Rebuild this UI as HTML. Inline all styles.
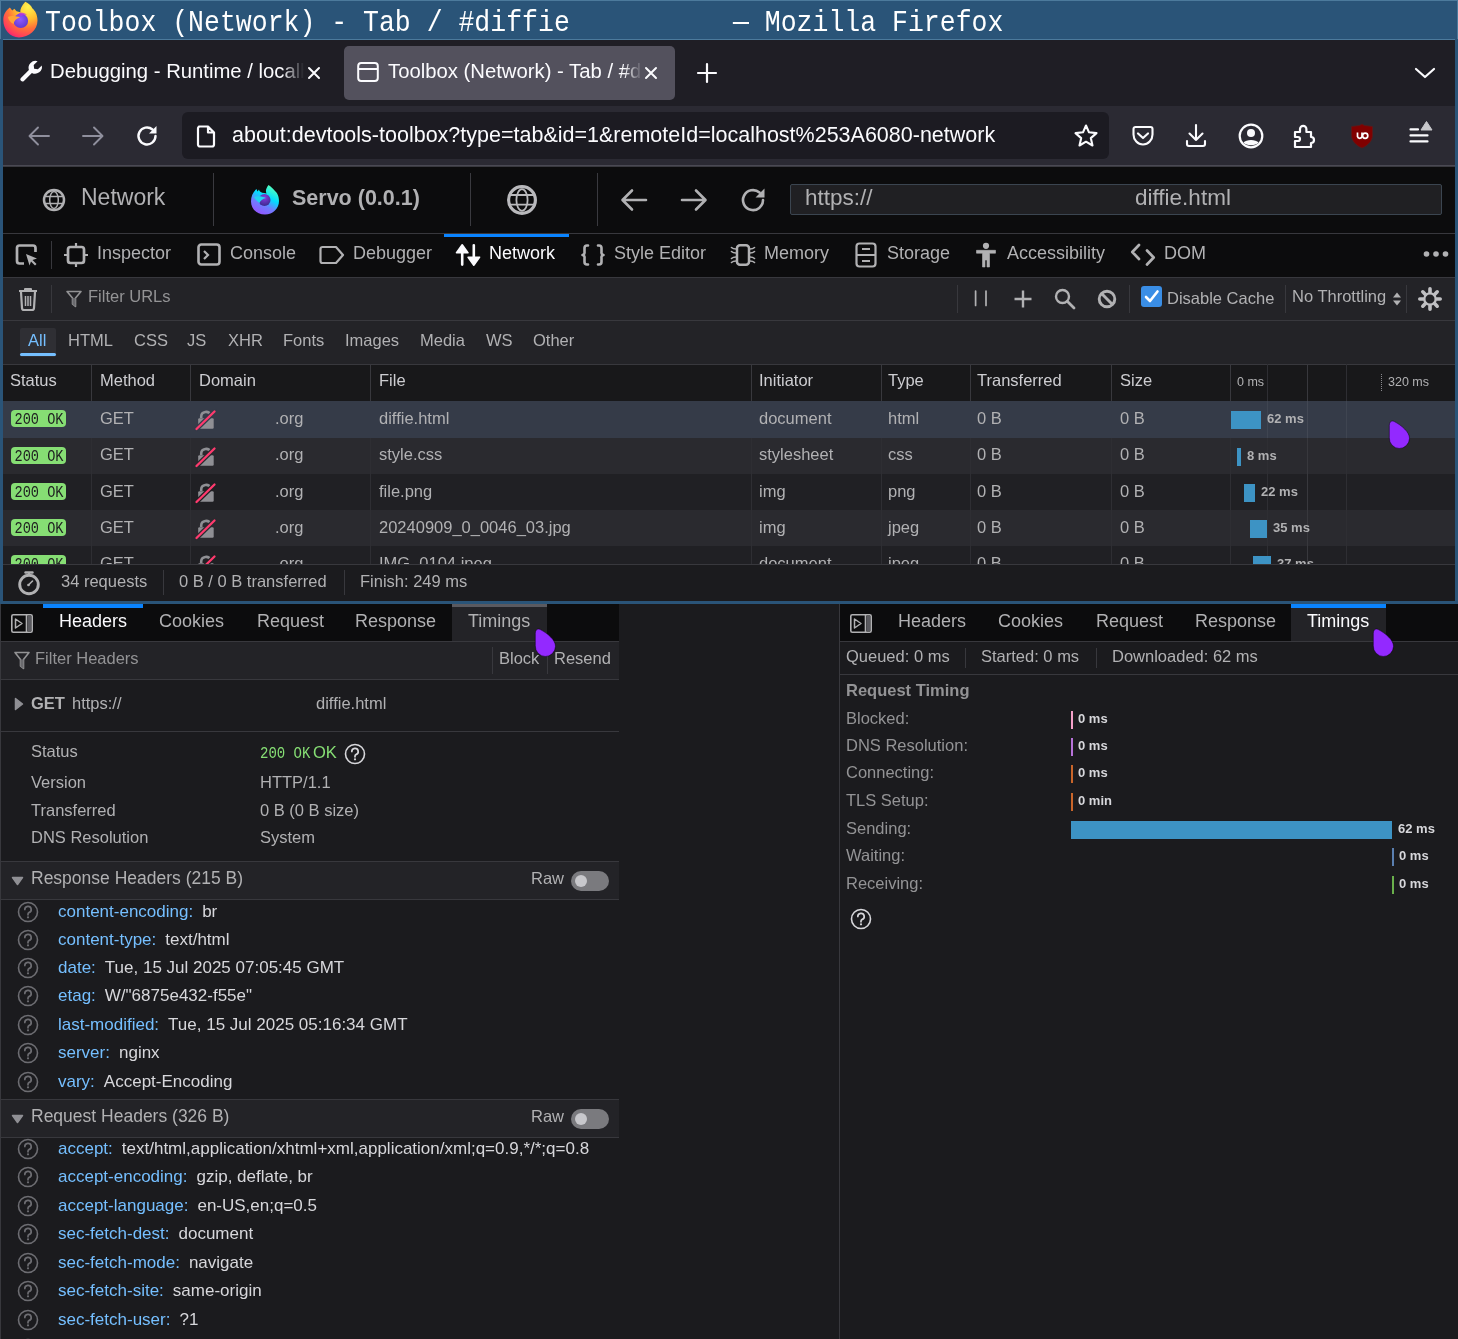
<!DOCTYPE html>
<html><head><meta charset="utf-8">
<style>
*{box-sizing:border-box;margin:0;padding:0}
html,body{width:1458px;height:1339px;overflow:hidden;background:#1b1b1e;}
body{will-change:transform;font-family:"Liberation Sans",sans-serif;color:#b1b1b3}
.a{position:absolute;white-space:nowrap}
svg{position:absolute;overflow:visible}
/* frame */
#title{left:0;top:0;width:1458px;height:40px;background:#2a5478;border:1px solid #4c7a9c}
#lb{left:0;top:39px;width:3px;height:565px;background:#2a5478}
#rb{left:1455px;top:39px;width:3px;height:565px;background:#2a5478}
#bb{left:0;top:601px;width:1458px;height:3px;background:#2a5478}
.ttl{font-family:"Liberation Mono",monospace;font-size:26.5px;color:#fff;top:4.5px;line-height:36px;transform:scaleY(1.13);transform-origin:0 50%}
#tabs{left:3px;top:40px;width:1452px;height:66px;background:#1f1e25}
#nav{left:3px;top:106px;width:1452px;height:60px;background:#2b2a33;border-bottom:1px solid #4a4953}
#servo{left:3px;top:166px;width:1452px;height:68px;background:#0c0c0d;border-top:1px solid #3a3a40;border-bottom:1px solid #38383d}
#tools{left:3px;top:234px;width:1452px;height:44px;background:#0c0c0d;border-bottom:1px solid #38383d}
#filt{left:3px;top:278px;width:1452px;height:43px;background:#232327;border-bottom:1px solid #38383d}
#types{left:3px;top:321px;width:1452px;height:44px;background:#232327;border-bottom:1px solid #38383d}
#thead{left:3px;top:365px;width:1452px;height:36px;background:#18181a}
.row{left:3px;width:1452px;height:36px}
#status{left:3px;top:564px;width:1452px;height:37px;background:#1b1b1e;border-top:1px solid #38383d}
.t16{font-size:16.5px}
.t18{font-size:18px}
.sep{position:absolute;width:1px;background:#38383d}
</style></head><body>

<!-- TITLE BAR -->
<div class="a" id="title"></div>
<div class="a" id="lb"></div>
<div class="a" id="rb"></div>
<svg style="left:0;top:0" width="40" height="40" viewBox="0 0 40 40">
 <defs>
  <radialGradient id="ffo" cx="0.72" cy="0.15" r="1.0"><stop offset="0" stop-color="#fff44f"/><stop offset="0.35" stop-color="#ffbd2e"/><stop offset="0.6" stop-color="#ff7139"/><stop offset="0.85" stop-color="#ff3b5c"/><stop offset="1" stop-color="#e31587"/></radialGradient>
  <radialGradient id="ffp" cx="0.45" cy="0.4" r="0.7"><stop offset="0" stop-color="#9059ff"/><stop offset="1" stop-color="#5b35c9"/></radialGradient>
 </defs>
 <path d="M25.3 1.8 C21.5 6 20 9.5 20.3 12.3 L16.5 11.3 L14.4 8.7 L12.2 10.6 L9.9 7.6 C5.5 10.5 3.3 15 3.3 20 C3.3 29.5 10 37.4 19 37.4 C29 37.4 37.5 30 37.5 20.5 C37.5 14.5 35 10.5 32.5 8.5 C31 5.5 28.5 3 25.3 1.8 Z" fill="url(#ffo)"/>
 <circle cx="20.8" cy="20.8" r="7.3" fill="url(#ffp)"/>
 <path d="M20.5 12.5 C23 12.5 26 13.5 27 15 C25 14.5 23 15.5 21.5 16 C19 15.5 17 13.5 20.5 12.5Z" fill="#b833e1" opacity="0.8"/>
 <path d="M8 17 C11 15.5 16.5 16 20 17.5 C16.5 18.5 14 20.5 13.5 24 C10.5 22.5 8.5 20 8 17Z" fill="#ffa436"/>
</svg>
<div class="a ttl" style="left:45px">Toolbox (Network) - Tab / #diffie</div>
<div class="a ttl" style="left:733px">— Mozilla Firefox</div>

<!-- TAB STRIP -->
<div class="a" id="tabs"></div>
<svg style="left:19px;top:60px" width="24" height="24" viewBox="0 0 16 16"><path d="M15.2 3.6 L12.6 6.2 L10.1 5.9 L9.8 3.4 L12.4 0.8 A4.6 4.6 0 0 0 6.6 6.6 L1.1 12.1 A1.45 1.45 0 0 0 3.1 14.1 L8.6 8.6 A4.6 4.6 0 0 0 15.2 3.6 Z" fill="#fbfbfe"/></svg>
<div class="a" style="left:50px;top:60px;font-size:20.3px;color:#fbfbfe;width:256px;overflow:hidden;-webkit-mask-image:linear-gradient(to right,#000 232px,transparent 254px)">Debugging - Runtime / localhost</div>
<svg style="left:307px;top:66px" width="14" height="14" viewBox="0 0 14 14"><path d="M2 2 L12 12 M12 2 L2 12" stroke="#fbfbfe" stroke-width="2" stroke-linecap="round"/></svg>
<div class="a" style="left:344px;top:46px;width:331px;height:54px;background:#53515d;border-radius:5px"></div>
<svg style="left:357px;top:61px" width="22" height="22" viewBox="0 0 22 22"><rect x="1.2" y="2" width="19.6" height="18" rx="3" fill="none" stroke="#fbfbfe" stroke-width="2"/><path d="M1.2 8 H20.8" stroke="#fbfbfe" stroke-width="2"/></svg>
<div class="a" style="left:388px;top:60px;font-size:20.3px;color:#fbfbfe;width:254px;overflow:hidden;-webkit-mask-image:linear-gradient(to right,#000 236px,transparent 254px)">Toolbox (Network) - Tab / #diffie</div>
<svg style="left:644px;top:66px" width="14" height="14" viewBox="0 0 14 14"><path d="M2 2 L12 12 M12 2 L2 12" stroke="#fbfbfe" stroke-width="2" stroke-linecap="round"/></svg>
<svg style="left:697px;top:63px" width="20" height="20" viewBox="0 0 20 20"><path d="M10 1 V19 M1 10 H19" stroke="#fbfbfe" stroke-width="2.2" stroke-linecap="round"/></svg>
<svg style="left:1414px;top:66px" width="22" height="14" viewBox="0 0 22 14"><path d="M2 3 L11 11 L20 3" fill="none" stroke="#fbfbfe" stroke-width="2.2" stroke-linecap="round" stroke-linejoin="round"/></svg>

<!-- NAV BAR -->
<div class="a" id="nav"></div>
<svg style="left:27px;top:125px" width="24" height="22" viewBox="0 0 24 22"><path d="M22 11 H3 M11 2.5 L2.5 11 L11 19.5" fill="none" stroke="#8f8f9d" stroke-width="1.9" stroke-linecap="round" stroke-linejoin="round"/></svg>
<svg style="left:81px;top:125px" width="24" height="22" viewBox="0 0 24 22"><path d="M2 11 H21 M13 2.5 L21.5 11 L13 19.5" fill="none" stroke="#8f8f9d" stroke-width="1.9" stroke-linecap="round" stroke-linejoin="round"/></svg>
<svg style="left:135px;top:124px" width="24" height="24" viewBox="0 0 24 24"><path d="M20.5 12 A8.5 8.5 0 1 1 17.5 5.5" fill="none" stroke="#fbfbfe" stroke-width="2.4" stroke-linecap="round"/><path d="M21.5 2 V9.5 H14 Z" fill="#fbfbfe"/></svg>
<div class="a" style="left:182px;top:112px;width:927px;height:47px;background:#1c1b22;border-radius:6px"></div>
<svg style="left:196px;top:125px" width="20" height="23" viewBox="0 0 20 23"><path d="M3 1.5 H12 L18 7.5 V19.5 A2 2 0 0 1 16 21.5 H4 A2 2 0 0 1 2 19.5 V3.5 A2 2 0 0 1 4 1.5 Z M12 1.5 V7.5 H18" fill="none" stroke="#fbfbfe" stroke-width="2.2" stroke-linejoin="round"/></svg>
<div class="a" style="left:232px;top:122.5px;font-size:21.5px;color:#fbfbfe">about:devtools-toolbox?type=tab&amp;id=1&amp;remoteId=localhost%253A6080-network</div>
<svg style="left:1073px;top:123px" width="26" height="26" viewBox="0 0 26 26"><path d="M13 2.5 L16 9.3 L23.5 10.1 L17.8 15.1 L19.5 22.5 L13 18.7 L6.5 22.5 L8.2 15.1 L2.5 10.1 L10 9.3 Z" fill="none" stroke="#fbfbfe" stroke-width="2.1" stroke-linejoin="round"/></svg>
<svg style="left:1131px;top:125px" width="24" height="22" viewBox="0 0 24 22"><path d="M4.5 2 H19.5 A2 2 0 0 1 21.5 4 V9.5 A9.5 10 0 0 1 2.5 9.5 V4 A2 2 0 0 1 4.5 2 Z" fill="none" stroke="#fbfbfe" stroke-width="2.1"/><path d="M7 8.5 L12 13 L17 8.5" fill="none" stroke="#fbfbfe" stroke-width="2.2" stroke-linecap="round" stroke-linejoin="round"/></svg>
<svg style="left:1184px;top:123px" width="24" height="26" viewBox="0 0 24 26"><path d="M12 2 V17 M5.5 10.5 L12 17 L18.5 10.5" fill="none" stroke="#fbfbfe" stroke-width="2.1" stroke-linecap="round" stroke-linejoin="round"/><path d="M3 18 V21 A2 2 0 0 0 5 23 H19 A2 2 0 0 0 21 21 V18" fill="none" stroke="#fbfbfe" stroke-width="2.1" stroke-linecap="round"/></svg>
<svg style="left:1238px;top:123px" width="26" height="26" viewBox="0 0 26 26"><circle cx="13" cy="13" r="11.3" fill="none" stroke="#fbfbfe" stroke-width="2.2"/><circle cx="13" cy="10" r="4" fill="#fbfbfe"/><path d="M5.5 19.5 C8 16 18 16 20.5 19.5 C18 23 8 23 5.5 19.5Z" fill="#fbfbfe"/></svg>
<svg style="left:1293px;top:123px" width="24" height="26" viewBox="0 0 24 26"><path d="M2 9 H7 V6 A3.2 3.2 0 0 1 13.4 6 V9 H18 V14 A3 3 0 0 1 18 20 V24 H2 V18 H5 A2 2 0 0 0 5 14 H2 Z" fill="none" stroke="#fbfbfe" stroke-width="2.2" stroke-linejoin="round"/></svg>
<svg style="left:1348px;top:123px" width="28" height="26" viewBox="0 0 28 26"><path d="M14 1 L16.5 2.5 L24.5 3.5 V12 C24.5 18 20 22.5 14 25 C8 22.5 3.5 18 3.5 12 V3.5 L11.5 2.5 Z" fill="#800000" stroke="#5a1a1a" stroke-width="0.8"/><path d="M9.5 9.5 V13.5 A2.3 2.3 0 0 0 14 13.5 V9.5" fill="none" stroke="#fff" stroke-width="1.7"/><circle cx="17.2" cy="12.8" r="2.6" fill="none" stroke="#fff" stroke-width="1.7"/></svg>
<svg style="left:1405px;top:118px" width="30" height="28" viewBox="0 0 30 28"><path d="M5.5 11.4 H13 M5.5 17.4 H22.5 M5.5 23.4 H22.5" stroke="#fbfbfe" stroke-width="2.2" stroke-linecap="round"/><path d="M16 12 L21.5 3.5 L27 12 Z" fill="#c8c8cc" stroke="#c8c8cc" stroke-width="1" stroke-linejoin="round"/></svg>

<!-- SERVO TOOLBAR -->
<div class="a" id="servo"></div>
<div class="sep" style="left:213px;top:173px;height:53px;background:#3a3a3f"></div>
<div class="sep" style="left:470px;top:173px;height:53px;background:#3a3a3f"></div>
<div class="sep" style="left:597px;top:173px;height:53px;background:#3a3a3f"></div>
<svg style="left:41.7px;top:187.5px" width="24" height="24" viewBox="0 0 24 24"><g fill="none" stroke="#b1b1b3"><circle cx="12" cy="12" r="10" stroke-width="2.5"/><ellipse cx="12" cy="12" rx="4.3" ry="8.5" stroke-width="1.5"/><path d="M3 8.5 H21 M3 15.5 H21" stroke-width="1.5"/></g></svg>
<div class="a" style="left:81px;top:184px;font-size:23px;color:#b1b1b3">Network</div>
<svg style="left:250px;top:184px" width="30" height="31" viewBox="0 0 30 31"><defs><linearGradient id="nl" x1="0.75" y1="0.05" x2="0.3" y2="0.95"><stop offset="0" stop-color="#54ffbd"/><stop offset="0.4" stop-color="#00ddff"/><stop offset="0.7" stop-color="#6f7dff"/><stop offset="1" stop-color="#9059ff"/></linearGradient><radialGradient id="nc" cx="0.5" cy="0.3" r="0.7"><stop offset="0" stop-color="#8a3be0"/><stop offset="1" stop-color="#3a2a8f"/></radialGradient></defs><path d="M18.5 1 C15.5 5 15.5 7.5 16.5 9.5 C13 8.5 11 9 9.5 7 L9 5.5 L7.5 7.5 L6.5 5 C3 8 1 12 1 17.5 C1 25 7 30.5 15 30.5 C23 30.5 29 24.5 29 17 C29 12 27 8.5 25 7 C23 4.5 21 2.5 18.5 1Z" fill="url(#nl)"/><circle cx="14.5" cy="16" r="6" fill="url(#nc)"/><path d="M4 13 C7 12 12 12 16 14 C12.5 15 10.5 16.5 9.5 19 C7 17 5 15 4 13Z" fill="#1fd5f0"/></svg>
<div class="a" style="left:292px;top:186px;font-size:21.5px;font-weight:bold;color:#b1b1b3">Servo (0.0.1)</div>
<svg style="left:506px;top:184px" width="32" height="32" viewBox="0 0 32 32"><g fill="none" stroke="#b9b9bc"><circle cx="16" cy="16" r="13.4" stroke-width="3.2"/><ellipse cx="16" cy="16" rx="5.6" ry="10.8" stroke-width="1.8"/><path d="M4 11 H28 M4 20.7 H28" stroke-width="1.8"/></g></svg>
<svg style="left:620px;top:188px" width="28" height="24" viewBox="0 0 28 24"><path d="M26 12 H3 M12 2.5 L2.5 12 L12 21.5" fill="none" stroke="#b1b1b3" stroke-width="2.6" stroke-linecap="round" stroke-linejoin="round"/></svg>
<svg style="left:680px;top:188px" width="28" height="24" viewBox="0 0 28 24"><path d="M2 12 H25 M16 2.5 L25.5 12 L16 21.5" fill="none" stroke="#b1b1b3" stroke-width="2.6" stroke-linecap="round" stroke-linejoin="round"/></svg>
<svg style="left:739px;top:186px" width="28" height="28" viewBox="0 0 28 28"><path d="M24 14 A10 10 0 1 1 20.5 6.5" fill="none" stroke="#b1b1b3" stroke-width="2.6" stroke-linecap="round"/><path d="M25.5 2.5 V11.5 H16.5 Z" fill="#b1b1b3"/></svg>
<div class="a" style="left:790px;top:184px;width:652px;height:31px;background:#202023;border:1px solid #3b4550;border-radius:2px"></div>
<div class="a" style="left:805px;top:185px;font-size:22.5px;color:#b1b1b3">https://</div>
<div class="a" style="left:1135px;top:185px;font-size:22.5px;color:#b1b1b3">diffie.html</div>

<!-- TOOL TABS -->
<div class="a" id="tools"></div>
<div class="a" style="left:444px;top:234px;width:125px;height:3px;background:#0a84ff"></div>
<div class="sep" style="left:51px;top:241px;height:28px"></div>
<svg style="left:15px;top:243px" width="24" height="24" viewBox="0 0 24 24"><path d="M9 20.5 H4.5 A2.5 2.5 0 0 1 2 18 V5 A2.5 2.5 0 0 1 4.5 2.5 H18 A2.5 2.5 0 0 1 20.5 5 V9" fill="none" stroke="#b1b1b3" stroke-width="2.7"/><path d="M11 11 L22 15.5 L17.5 17 L21.5 21 L20 22.5 L16 18.5 L14.5 22.5 Z" fill="#b1b1b3"/></svg>
<svg style="left:63px;top:242px" width="26" height="26" viewBox="0 0 26 26"><rect x="5" y="5" width="16" height="16" rx="2.5" fill="none" stroke="#b1b1b3" stroke-width="2.7"/><path d="M13 1 V5 M13 21 V25 M1 13 H5 M21 13 H25" stroke="#b1b1b3" stroke-width="2.2"/></svg>
<div class="a t18" style="left:97px;top:243px;color:#b1b1b3">Inspector</div>
<svg style="left:197px;top:243px" width="24" height="23" viewBox="0 0 24 23"><rect x="1.5" y="1.5" width="21" height="20" rx="2.8" fill="none" stroke="#b1b1b3" stroke-width="2.6"/><path d="M7 8 L11 12 L7 16" fill="none" stroke="#b1b1b3" stroke-width="2.2"/></svg>
<div class="a t18" style="left:230px;top:243px;color:#b1b1b3">Console</div>
<svg style="left:319px;top:245px" width="26" height="20" viewBox="0 0 26 20"><path d="M3.5 2 H17 L24 10 L17 18 H3.5 A2 2 0 0 1 1.5 16 V4 A2 2 0 0 1 3.5 2 Z" fill="none" stroke="#b1b1b3" stroke-width="2.2" stroke-linejoin="round"/></svg>
<div class="a t18" style="left:353px;top:243px;color:#b1b1b3">Debugger</div>
<svg style="left:452px;top:240px" width="30" height="28" viewBox="0 0 30 28"><path d="M10.2 11 V24.6 M21.8 5.2 V19" stroke="#fbfbfe" stroke-width="2.6" stroke-linecap="round"/><path d="M4.5 12.8 L10.2 4.8 L15.9 12.8 Z M16.1 17.2 L21.8 25.2 L27.5 17.2 Z" fill="#fbfbfe" stroke="#fbfbfe" stroke-width="1.6" stroke-linejoin="round"/></svg>
<div class="a t18" style="left:489px;top:243px;color:#fbfbfe">Network</div>
<svg style="left:581px;top:244px" width="24" height="22" viewBox="0 0 24 22"><path d="M7 1.5 H6 A2.5 2.5 0 0 0 3.5 4 V8 A2.5 2.5 0 0 1 1.5 11 A2.5 2.5 0 0 1 3.5 14 V18 A2.5 2.5 0 0 0 6 20.5 H7 M17 1.5 H18 A2.5 2.5 0 0 1 20.5 4 V8 A2.5 2.5 0 0 0 22.5 11 A2.5 2.5 0 0 0 20.5 14 V18 A2.5 2.5 0 0 1 18 20.5 H17" fill="none" stroke="#b1b1b3" stroke-width="2.6" stroke-linecap="round" stroke-linejoin="round"/></svg>
<div class="a t18" style="left:614px;top:243px;color:#b1b1b3">Style Editor</div>
<svg style="left:730px;top:244px" width="26" height="22" viewBox="0 0 26 22"><rect x="7" y="1.3" width="12" height="19.4" rx="3" fill="none" stroke="#b1b1b3" stroke-width="2.5"/><path d="M6 5 Q3 5 1.5 3.5 M6 9 Q3 9 1.5 7.5 M6 13 Q3 13 1.5 14.5 M6 17 Q3 17 1.5 18.5 M20 5 Q23 5 24.5 3.5 M20 9 Q23 9 24.5 7.5 M20 13 Q23 13 24.5 14.5 M20 17 Q23 17 24.5 18.5" fill="none" stroke="#b1b1b3" stroke-width="1.6" stroke-linecap="round"/></svg>
<div class="a t18" style="left:764px;top:243px;color:#b1b1b3">Memory</div>
<svg style="left:855px;top:242px" width="22" height="26" viewBox="0 0 22 26"><rect x="1.5" y="1.5" width="19" height="23" rx="3" fill="none" stroke="#b1b1b3" stroke-width="2.2"/><path d="M1.5 13 H20.5 M7 7 H15 M7 19 H15" stroke="#b1b1b3" stroke-width="2.2"/></svg>
<div class="a t18" style="left:887px;top:243px;color:#b1b1b3">Storage</div>
<svg style="left:974px;top:241px" width="24" height="28" viewBox="0 0 24 28"><circle cx="12" cy="4.8" r="3.1" fill="#b1b1b3"/><path d="M2.5 9.3 H21.5 V12.2 H15.5 V26 H13 V19 H11 V26 H8.5 V12.2 H2.5 Z" fill="#b1b1b3" stroke="#b1b1b3" stroke-width="0.6" stroke-linejoin="round"/></svg>
<div class="a t18" style="left:1007px;top:243px;color:#b1b1b3">Accessibility</div>
<svg style="left:1130px;top:243px" width="26" height="26" viewBox="0 0 26 26"><path d="M9 2 L2.3 9 L9 16 M17 7.5 L23.7 14.5 L17 21.5" fill="none" stroke="#b1b1b3" stroke-width="2.7" stroke-linecap="round" stroke-linejoin="round"/></svg>
<div class="a t18" style="left:1164px;top:243px;color:#b1b1b3">DOM</div>
<svg style="left:1423px;top:250px" width="26" height="8" viewBox="0 0 26 8"><circle cx="3.5" cy="4" r="2.8" fill="#b1b1b3"/><circle cx="13" cy="4" r="2.8" fill="#b1b1b3"/><circle cx="22.5" cy="4" r="2.8" fill="#b1b1b3"/></svg>

<!-- FILTER BAR -->
<div class="a" id="filt"></div>
<div class="sep" style="left:51px;top:285px;height:28px"></div>
<svg style="left:18px;top:287px" width="20" height="24" viewBox="0 0 20 24"><path d="M1 4 H19 M7 4 V2 H13 V4" fill="none" stroke="#b1b1b3" stroke-width="2" stroke-linejoin="round"/><path d="M3 5 L4 21 A2 2 0 0 0 6 23 H14 A2 2 0 0 0 16 21 L17 5" fill="none" stroke="#b1b1b3" stroke-width="2.2"/><path d="M7.5 9 V19 M10 9 V19 M12.5 9 V19" stroke="#b1b1b3" stroke-width="1.5"/></svg>
<svg style="left:66px;top:290px" width="16" height="18" viewBox="0 0 16 18"><path d="M1 1.5 H15 L9.5 8 V16.5 L6.5 14 V8 Z" fill="none" stroke="#939395" stroke-width="1.6" stroke-linejoin="round"/><path d="M6.5 8 V14 L9.5 16.5 V8Z" fill="#6a6a6e"/></svg>
<div class="a t16" style="left:88px;top:287px;color:#939395">Filter URLs</div>
<div class="sep" style="left:957px;top:285px;height:28px"></div>
<svg style="left:974px;top:290px" width="14" height="16" viewBox="0 0 14 16"><path d="M1.6 1 V15.5 M12 1 V15.5" stroke="#b1b1b3" stroke-width="1.7" stroke-linecap="round"/></svg>
<svg style="left:1013px;top:289px" width="20" height="20" viewBox="0 0 20 20"><path d="M10 1.5 V18.5 M1.5 10 H18.5" stroke="#b1b1b3" stroke-width="2.4"/></svg>
<svg style="left:1054px;top:288px" width="22" height="22" viewBox="0 0 22 22"><circle cx="8.5" cy="8.5" r="6.5" fill="none" stroke="#b1b1b3" stroke-width="2.4"/><path d="M13.5 13.5 L20 20" stroke="#b1b1b3" stroke-width="2.8" stroke-linecap="round"/></svg>
<svg style="left:1097px;top:289px" width="20" height="20" viewBox="0 0 20 20"><circle cx="10" cy="10" r="7.8" fill="none" stroke="#b1b1b3" stroke-width="2.9"/><path d="M4.8 4.8 L15.2 15.2" stroke="#b1b1b3" stroke-width="2.9"/></svg>
<div class="sep" style="left:1129px;top:285px;height:28px"></div>
<div class="a" style="left:1141px;top:286px;width:21px;height:21px;background:#3a8ee6;border-radius:3px"></div>
<svg style="left:1143px;top:288px" width="17" height="17" viewBox="0 0 17 17"><path d="M3 9 L7 13 L14.5 3.5" fill="none" stroke="#fff" stroke-width="2.6" stroke-linecap="round" stroke-linejoin="round"/></svg>
<div class="a t16" style="left:1167px;top:289px;color:#b1b1b3">Disable Cache</div>
<div class="sep" style="left:1285px;top:285px;height:28px"></div>
<div class="a t16" style="left:1292px;top:287px;color:#b1b1b3">No Throttling</div>
<svg style="left:1392px;top:291px" width="10" height="16" viewBox="0 0 10 16"><path d="M1 6.5 L5 1.5 L9 6.5Z M1 9.5 L5 14.5 L9 9.5Z" fill="#b1b1b3"/></svg>
<div class="sep" style="left:1406px;top:285px;height:28px"></div>
<svg style="left:1417px;top:286px" width="26" height="26" viewBox="0 0 26 26"><circle cx="13" cy="13" r="5.7" fill="none" stroke="#c0c0c3" stroke-width="2.3"/><path d="M19.50 13.00 L23.20 13.00 M17.60 17.60 L20.21 20.21 M13.00 19.50 L13.00 23.20 M8.40 17.60 L5.79 20.21 M6.50 13.00 L2.80 13.00 M8.40 8.40 L5.79 5.79 M13.00 6.50 L13.00 2.80 M17.60 8.40 L20.21 5.79 " stroke="#c0c0c3" stroke-width="3.6" stroke-linecap="round"/></svg>

<!-- TYPE FILTERS -->
<div class="a" id="types"></div>
<div class="a" style="left:20px;top:328px;width:36px;height:29px;background:#2f2f34;border-radius:2px"></div>
<div class="a" style="left:20px;top:353px;width:36px;height:3px;background:#75bfff;border-radius:2px"></div>
<div class="a t16" style="left:28px;top:331px;color:#75bfff">All</div>
<div class="a t16" style="left:68px;top:331px">HTML</div>
<div class="a t16" style="left:134px;top:331px">CSS</div>
<div class="a t16" style="left:187px;top:331px">JS</div>
<div class="a t16" style="left:228px;top:331px">XHR</div>
<div class="a t16" style="left:283px;top:331px">Fonts</div>
<div class="a t16" style="left:345px;top:331px">Images</div>
<div class="a t16" style="left:420px;top:331px">Media</div>
<div class="a t16" style="left:486px;top:331px">WS</div>
<div class="a t16" style="left:533px;top:331px">Other</div>

<!-- TABLE -->
<div class="a" id="thead"></div>
<div class="a row" style="top:401px;height:37px;background:#353b48"></div>
<div class="a row" style="top:438px;background:#2a2a2f"></div>
<div class="a row" style="top:474px;background:#202024"></div>
<div class="a row" style="top:510px;background:#2a2a2f"></div>
<div class="a row" style="top:546px;height:18px;background:#202024"></div>
<div class="sep" style="left:91px;top:364px;height:200px;background:#2e2e33"></div>
<div class="sep" style="left:190px;top:364px;height:200px;background:#2e2e33"></div>
<div class="sep" style="left:370px;top:364px;height:200px;background:#2e2e33"></div>
<div class="sep" style="left:751px;top:364px;height:200px;background:#2e2e33"></div>
<div class="sep" style="left:881px;top:364px;height:200px;background:#2e2e33"></div>
<div class="sep" style="left:970px;top:364px;height:200px;background:#2e2e33"></div>
<div class="sep" style="left:1111px;top:364px;height:200px;background:#2e2e33"></div>
<div class="sep" style="left:1230px;top:364px;height:200px;background:#2e2e33"></div>
<div class="sep" style="left:1267px;top:364px;height:200px;background:#2e2e33"></div>
<div class="sep" style="left:1307px;top:364px;height:200px;background:#38383d"></div>
<div class="sep" style="left:1346px;top:364px;height:200px;background:#2e2e33"></div>
<div class="sep" style="left:91px;top:364px;height:37px;background:#38383d"></div>
<div class="sep" style="left:190px;top:364px;height:37px;background:#38383d"></div>
<div class="sep" style="left:370px;top:364px;height:37px;background:#38383d"></div>
<div class="sep" style="left:751px;top:364px;height:37px;background:#38383d"></div>
<div class="sep" style="left:881px;top:364px;height:37px;background:#38383d"></div>
<div class="sep" style="left:970px;top:364px;height:37px;background:#38383d"></div>
<div class="sep" style="left:1111px;top:364px;height:37px;background:#38383d"></div>
<div class="sep" style="left:1230px;top:364px;height:37px;background:#38383d"></div>
<div class="a row" style="top:401px;height:37px;background:#353b48"></div>
<div class="sep" style="left:1267px;top:401px;height:37px;background:rgba(255,255,255,0.05)"></div>
<div class="sep" style="left:1307px;top:401px;height:37px;background:rgba(255,255,255,0.07)"></div>
<div class="sep" style="left:1346px;top:401px;height:37px;background:rgba(255,255,255,0.05)"></div>
<div class="a" style="left:1381px;top:374px;height:17px;width:1px;border-left:1px dotted #8a8a8f"></div>
<div class="a t16" style="left:10px;top:371px;color:#cdcdd1">Status</div>
<div class="a t16" style="left:100px;top:371px;color:#cdcdd1">Method</div>
<div class="a t16" style="left:199px;top:371px;color:#cdcdd1">Domain</div>
<div class="a t16" style="left:379px;top:371px;color:#cdcdd1">File</div>
<div class="a t16" style="left:759px;top:371px;color:#cdcdd1">Initiator</div>
<div class="a t16" style="left:888px;top:371px;color:#cdcdd1">Type</div>
<div class="a t16" style="left:977px;top:371px;color:#cdcdd1">Transferred</div>
<div class="a t16" style="left:1120px;top:371px;color:#cdcdd1">Size</div>
<div class="a" style="left:1237px;top:375px;font-size:12.5px;color:#b1b1b3">0 ms</div>
<div class="a" style="left:1388px;top:375px;font-size:12.5px;color:#b1b1b3">320 ms</div>
<div class="a" style="left:11px;top:410px;width:55px;height:17px;background:#86de74;border-radius:4px"></div>
<div class="a" style="left:14.5px;top:411px;font-family:'Liberation Mono',monospace;font-size:13.6px;line-height:17px;color:#1e1e20;transform:scaleY(1.17);transform-origin:0 50%">200 OK</div>
<div class="a t16" style="left:100px;top:409px">GET</div>
<svg style="left:195px;top:410px" width="22" height="22" viewBox="0 0 22 22"><path d="M6.2 8 V6.5 A4.8 4.8 0 0 1 15.5 5" fill="none" stroke="#8f8f94" stroke-width="2.6"/><rect x="3.2" y="8.2" width="15.5" height="10.5" rx="1.2" fill="#8f8f94"/><path d="M1.5 19 L19.5 1.5" stroke="#353b48" stroke-width="4.6" stroke-linecap="round"/><path d="M1.5 19 L19.5 1.5" stroke="#ff3a6e" stroke-width="2.3" stroke-linecap="round"/></svg>
<div class="a t16" style="left:275px;top:409px">.org</div>
<div class="a t16" style="left:379px;top:409px">diffie.html</div>
<div class="a t16" style="left:759px;top:409px">document</div>
<div class="a t16" style="left:888px;top:409px">html</div>
<div class="a t16" style="left:977px;top:409px">0 B</div>
<div class="a t16" style="left:1120px;top:409px">0 B</div>
<div class="a" style="left:1231px;top:411px;width:30px;height:18px;background:#3d93c4"></div>
<div class="a" style="left:1267px;top:411px;font-size:13px;font-weight:bold;color:#b1b1b3">62 ms</div>
<div class="a" style="left:11px;top:447px;width:55px;height:17px;background:#86de74;border-radius:4px"></div>
<div class="a" style="left:14.5px;top:448px;font-family:'Liberation Mono',monospace;font-size:13.6px;line-height:17px;color:#1e1e20;transform:scaleY(1.17);transform-origin:0 50%">200 OK</div>
<div class="a t16" style="left:100px;top:445px">GET</div>
<svg style="left:195px;top:447px" width="22" height="22" viewBox="0 0 22 22"><path d="M6.2 8 V6.5 A4.8 4.8 0 0 1 15.5 5" fill="none" stroke="#8f8f94" stroke-width="2.6"/><rect x="3.2" y="8.2" width="15.5" height="10.5" rx="1.2" fill="#8f8f94"/><path d="M1.5 19 L19.5 1.5" stroke="#2a2a2f" stroke-width="4.6" stroke-linecap="round"/><path d="M1.5 19 L19.5 1.5" stroke="#ff3a6e" stroke-width="2.3" stroke-linecap="round"/></svg>
<div class="a t16" style="left:275px;top:445px">.org</div>
<div class="a t16" style="left:379px;top:445px">style.css</div>
<div class="a t16" style="left:759px;top:445px">stylesheet</div>
<div class="a t16" style="left:888px;top:445px">css</div>
<div class="a t16" style="left:977px;top:445px">0 B</div>
<div class="a t16" style="left:1120px;top:445px">0 B</div>
<div class="a" style="left:1237px;top:448px;width:4px;height:18px;background:#3d93c4"></div>
<div class="a" style="left:1247px;top:448px;font-size:13px;font-weight:bold;color:#b1b1b3">8 ms</div>
<div class="a" style="left:11px;top:483px;width:55px;height:17px;background:#86de74;border-radius:4px"></div>
<div class="a" style="left:14.5px;top:484px;font-family:'Liberation Mono',monospace;font-size:13.6px;line-height:17px;color:#1e1e20;transform:scaleY(1.17);transform-origin:0 50%">200 OK</div>
<div class="a t16" style="left:100px;top:482px">GET</div>
<svg style="left:195px;top:483px" width="22" height="22" viewBox="0 0 22 22"><path d="M6.2 8 V6.5 A4.8 4.8 0 0 1 15.5 5" fill="none" stroke="#8f8f94" stroke-width="2.6"/><rect x="3.2" y="8.2" width="15.5" height="10.5" rx="1.2" fill="#8f8f94"/><path d="M1.5 19 L19.5 1.5" stroke="#202024" stroke-width="4.6" stroke-linecap="round"/><path d="M1.5 19 L19.5 1.5" stroke="#ff3a6e" stroke-width="2.3" stroke-linecap="round"/></svg>
<div class="a t16" style="left:275px;top:482px">.org</div>
<div class="a t16" style="left:379px;top:482px">file.png</div>
<div class="a t16" style="left:759px;top:482px">img</div>
<div class="a t16" style="left:888px;top:482px">png</div>
<div class="a t16" style="left:977px;top:482px">0 B</div>
<div class="a t16" style="left:1120px;top:482px">0 B</div>
<div class="a" style="left:1244px;top:484px;width:11px;height:18px;background:#3d93c4"></div>
<div class="a" style="left:1261px;top:484px;font-size:13px;font-weight:bold;color:#b1b1b3">22 ms</div>
<div class="a" style="left:11px;top:519px;width:55px;height:17px;background:#86de74;border-radius:4px"></div>
<div class="a" style="left:14.5px;top:520px;font-family:'Liberation Mono',monospace;font-size:13.6px;line-height:17px;color:#1e1e20;transform:scaleY(1.17);transform-origin:0 50%">200 OK</div>
<div class="a t16" style="left:100px;top:518px">GET</div>
<svg style="left:195px;top:519px" width="22" height="22" viewBox="0 0 22 22"><path d="M6.2 8 V6.5 A4.8 4.8 0 0 1 15.5 5" fill="none" stroke="#8f8f94" stroke-width="2.6"/><rect x="3.2" y="8.2" width="15.5" height="10.5" rx="1.2" fill="#8f8f94"/><path d="M1.5 19 L19.5 1.5" stroke="#2a2a2f" stroke-width="4.6" stroke-linecap="round"/><path d="M1.5 19 L19.5 1.5" stroke="#ff3a6e" stroke-width="2.3" stroke-linecap="round"/></svg>
<div class="a t16" style="left:275px;top:518px">.org</div>
<div class="a t16" style="left:379px;top:518px">20240909_0_0046_03.jpg</div>
<div class="a t16" style="left:759px;top:518px">img</div>
<div class="a t16" style="left:888px;top:518px">jpeg</div>
<div class="a t16" style="left:977px;top:518px">0 B</div>
<div class="a t16" style="left:1120px;top:518px">0 B</div>
<div class="a" style="left:1250px;top:520px;width:17px;height:18px;background:#3d93c4"></div>
<div class="a" style="left:1273px;top:520px;font-size:13px;font-weight:bold;color:#b1b1b3">35 ms</div>
<div class="a" style="left:11px;top:555px;width:55px;height:17px;background:#86de74;border-radius:4px"></div>
<div class="a" style="left:14.5px;top:556px;font-family:'Liberation Mono',monospace;font-size:13.6px;line-height:17px;color:#1e1e20;transform:scaleY(1.17);transform-origin:0 50%">200 OK</div>
<div class="a t16" style="left:100px;top:554px">GET</div>
<svg style="left:195px;top:555px" width="22" height="22" viewBox="0 0 22 22"><path d="M6.2 8 V6.5 A4.8 4.8 0 0 1 15.5 5" fill="none" stroke="#8f8f94" stroke-width="2.6"/><rect x="3.2" y="8.2" width="15.5" height="10.5" rx="1.2" fill="#8f8f94"/><path d="M1.5 19 L19.5 1.5" stroke="#202024" stroke-width="4.6" stroke-linecap="round"/><path d="M1.5 19 L19.5 1.5" stroke="#ff3a6e" stroke-width="2.3" stroke-linecap="round"/></svg>
<div class="a t16" style="left:275px;top:554px">.org</div>
<div class="a t16" style="left:379px;top:554px">IMG_0104.jpeg</div>
<div class="a t16" style="left:759px;top:554px">document</div>
<div class="a t16" style="left:888px;top:554px">jpeg</div>
<div class="a t16" style="left:977px;top:554px">0 B</div>
<div class="a t16" style="left:1120px;top:554px">0 B</div>
<div class="a" style="left:1253px;top:556px;width:18px;height:18px;background:#3d93c4"></div>
<div class="a" style="left:1277px;top:556px;font-size:13px;font-weight:bold;color:#b1b1b3">37 ms</div>
<div class="a" style="left:3px;top:564px;width:1452px;height:37px;background:#1b1b1e;border-top:1px solid #38383d"></div>
<svg style="left:17px;top:570px" width="24" height="26" viewBox="0 0 24 26"><circle cx="12" cy="14.5" r="9.3" fill="none" stroke="#b1b1b3" stroke-width="2.9"/><path d="M8.5 2.5 H15.5" stroke="#b1b1b3" stroke-width="2.4" stroke-linecap="round"/><path d="M12 3 V5" stroke="#b1b1b3" stroke-width="2"/><path d="M11.5 15 L15.5 11" stroke="#b1b1b3" stroke-width="1.6" stroke-linecap="round"/><circle cx="11.5" cy="15" r="1.3" fill="#b1b1b3"/></svg>
<div class="a t16" style="left:61px;top:572px">34 requests</div>
<div class="sep" style="left:163px;top:570px;height:25px"></div>
<div class="a t16" style="left:179px;top:572px">0 B / 0 B transferred</div>
<div class="sep" style="left:344px;top:570px;height:25px"></div>
<div class="a t16" style="left:360px;top:572px">Finish: 249 ms</div>
<div class="a" id="bb"></div>
<!-- cursor 1 -->
<svg style="left:1387.5px;top:420px" width="23" height="30" viewBox="-1 -1 23 30"><path d="M3.5 0 C1.5 0 0.3 1.8 0.3 4.5 V16.8 A10.1 10.4 0 0 0 20.5 17.3 C20.5 11 12.5 4.3 5.4 0.6 C4.8 0.2 4.2 0 3.5 0 Z" fill="#9329ff" stroke="rgba(0,0,0,0.5)" stroke-width="0.9"/></svg>

<div class="a" style="left:0;top:604px;width:619px;height:735px;background:#1b1b1e;border-left:1px solid #38383d"></div>
<div class="a" style="left:1px;top:604px;width:618px;height:38px;background:#0c0c0d;border-bottom:1px solid #38383d"></div>
<div class="a" style="left:43px;top:604px;width:100px;height:4px;background:#0a84ff"></div>
<div class="a" style="left:452px;top:604px;width:95px;height:37px;background:#232327;border-top:3px solid #5a5a60"></div>
<svg style="left:11px;top:614px" width="22" height="19" viewBox="0 0 22 19"><rect x="0.8" y="0.8" width="20.4" height="17.4" rx="1.5" fill="none" stroke="#b1b1b3" stroke-width="1.6"/><path d="M15.5 1 V18" stroke="#b1b1b3" stroke-width="1.6"/><rect x="16.5" y="2" width="3.5" height="15" fill="#5a5a5f"/><path d="M4.5 5 L11 9.5 L4.5 14 Z" fill="none" stroke="#b1b1b3" stroke-width="1.5" stroke-linejoin="round"/></svg>
<div class="a t18" style="left:59px;top:611px;color:#fbfbfe">Headers</div>
<div class="a t18" style="left:159px;top:611px;color:#b1b1b3">Cookies</div>
<div class="a t18" style="left:257px;top:611px;color:#b1b1b3">Request</div>
<div class="a t18" style="left:355px;top:611px;color:#b1b1b3">Response</div>
<div class="a t18" style="left:468px;top:611px;color:#b1b1b3">Timings</div>
<div class="a" style="left:1px;top:642px;width:618px;height:38px;background:#232327;border-bottom:1px solid #38383d"></div>
<svg style="left:14px;top:651px" width="16" height="19" viewBox="0 0 16 19"><path d="M1 1.5 H15 L9.5 8.5 V17.5 L6.5 15 V8.5 Z" fill="none" stroke="#939395" stroke-width="1.6" stroke-linejoin="round"/><path d="M6.5 8.5 V15 L9.5 17.5 V8.5Z" fill="#6a6a6e"/></svg>
<div class="a t16" style="left:35px;top:649px;color:#939395">Filter Headers</div>
<div class="sep" style="left:492px;top:647px;height:27px"></div>
<div class="sep" style="left:547px;top:647px;height:27px"></div>
<div class="a t16" style="left:499px;top:649px">Block</div>
<div class="a t16" style="left:554px;top:649px">Resend</div>
<svg style="left:14px;top:697px" width="10" height="14" viewBox="0 0 10 14"><path d="M1.5 1.5 L8.5 7 L1.5 12.5Z" fill="#8f8f94" stroke="#8f8f94" stroke-width="1.5" stroke-linejoin="round"/></svg>
<div class="a t16" style="left:31px;top:694px;font-weight:bold;color:#b1b1b3">GET</div>
<div class="a t16" style="left:72px;top:694px">https://</div>
<div class="a t16" style="left:316px;top:694px">diffie.html</div>
<div class="a" style="left:1px;top:731px;width:618px;height:1px;background:#38383d"></div>
<div class="a t16" style="left:31px;top:742px">Status</div>
<div class="a t16" style="left:31px;top:773px">Version</div>
<div class="a t16" style="left:31px;top:801px">Transferred</div>
<div class="a t16" style="left:31px;top:828px">DNS Resolution</div>
<div class="a" style="left:260px;top:746px;font-family:'Liberation Mono',monospace;font-size:14px;color:#86de74;transform:scaleY(1.15);transform-origin:0 70%">200 OK</div>
<div class="a" style="left:313px;top:743px;font-size:16.5px;color:#86de74">OK</div>
<svg style="left:344px;top:743px" width="22" height="22" viewBox="0 0 22 22"><circle cx="11" cy="11" r="9.5" fill="none" stroke="#d7d7db" stroke-width="1.6"/><path d="M7.8 8.6 A3.2 3.2 0 1 1 11.9 11.6 C11.2 11.9 11 12.4 11 13.2 V13.8" fill="none" stroke="#d7d7db" stroke-width="1.7" stroke-linecap="round"/><circle cx="11" cy="16.3" r="1.1" fill="#d7d7db"/></svg>
<div class="a t16" style="left:260px;top:773px">HTTP/1.1</div>
<div class="a t16" style="left:260px;top:801px">0 B (0 B size)</div>
<div class="a t16" style="left:260px;top:828px">System</div>
<div class="a" style="left:1px;top:861px;width:618px;height:39px;background:#232327;border-top:1px solid #38383d;border-bottom:1px solid #38383d"></div>
<svg style="left:11px;top:876px" width="13" height="10" viewBox="0 0 13 10"><path d="M1.5 1.5 H11.5 L6.5 8.5Z" fill="#8f8f94" stroke="#8f8f94" stroke-width="1.5" stroke-linejoin="round"/></svg>
<div class="a" style="font-size:17.5px;left:31px;top:868px">Response Headers (215 B)</div>
<div class="a t16" style="left:531px;top:869px">Raw</div>
<div class="a" style="left:571px;top:871px;width:38px;height:20px;background:#7a7a7e;border-radius:10px"></div>
<div class="a" style="left:575px;top:875px;width:12px;height:12px;background:#c8c8cc;border-radius:6px"></div>
<svg style="left:17px;top:901px" width="22" height="22" viewBox="0 0 22 22"><circle cx="11" cy="11" r="9.5" fill="none" stroke="#6d6d72" stroke-width="1.6"/><path d="M7.8 8.6 A3.2 3.2 0 1 1 11.9 11.6 C11.2 11.9 11 12.4 11 13.2 V13.8" fill="none" stroke="#6d6d72" stroke-width="1.7" stroke-linecap="round"/><circle cx="11" cy="16.3" r="1.1" fill="#6d6d72"/></svg>
<div class="a" style="font-size:17px;left:58px;top:902px;color:#75bfff">content-encoding:<span style="color:#d7d7db;margin-left:9px">br</span></div>
<svg style="left:17px;top:929px" width="22" height="22" viewBox="0 0 22 22"><circle cx="11" cy="11" r="9.5" fill="none" stroke="#6d6d72" stroke-width="1.6"/><path d="M7.8 8.6 A3.2 3.2 0 1 1 11.9 11.6 C11.2 11.9 11 12.4 11 13.2 V13.8" fill="none" stroke="#6d6d72" stroke-width="1.7" stroke-linecap="round"/><circle cx="11" cy="16.3" r="1.1" fill="#6d6d72"/></svg>
<div class="a" style="font-size:17px;left:58px;top:930px;color:#75bfff">content-type:<span style="color:#d7d7db;margin-left:9px">text/html</span></div>
<svg style="left:17px;top:957px" width="22" height="22" viewBox="0 0 22 22"><circle cx="11" cy="11" r="9.5" fill="none" stroke="#6d6d72" stroke-width="1.6"/><path d="M7.8 8.6 A3.2 3.2 0 1 1 11.9 11.6 C11.2 11.9 11 12.4 11 13.2 V13.8" fill="none" stroke="#6d6d72" stroke-width="1.7" stroke-linecap="round"/><circle cx="11" cy="16.3" r="1.1" fill="#6d6d72"/></svg>
<div class="a" style="font-size:17px;left:58px;top:958px;color:#75bfff">date:<span style="color:#d7d7db;margin-left:9px">Tue, 15 Jul 2025 07:05:45 GMT</span></div>
<svg style="left:17px;top:985px" width="22" height="22" viewBox="0 0 22 22"><circle cx="11" cy="11" r="9.5" fill="none" stroke="#6d6d72" stroke-width="1.6"/><path d="M7.8 8.6 A3.2 3.2 0 1 1 11.9 11.6 C11.2 11.9 11 12.4 11 13.2 V13.8" fill="none" stroke="#6d6d72" stroke-width="1.7" stroke-linecap="round"/><circle cx="11" cy="16.3" r="1.1" fill="#6d6d72"/></svg>
<div class="a" style="font-size:17px;left:58px;top:986px;color:#75bfff">etag:<span style="color:#d7d7db;margin-left:9px">W/"6875e432-f55e"</span></div>
<svg style="left:17px;top:1014px" width="22" height="22" viewBox="0 0 22 22"><circle cx="11" cy="11" r="9.5" fill="none" stroke="#6d6d72" stroke-width="1.6"/><path d="M7.8 8.6 A3.2 3.2 0 1 1 11.9 11.6 C11.2 11.9 11 12.4 11 13.2 V13.8" fill="none" stroke="#6d6d72" stroke-width="1.7" stroke-linecap="round"/><circle cx="11" cy="16.3" r="1.1" fill="#6d6d72"/></svg>
<div class="a" style="font-size:17px;left:58px;top:1015px;color:#75bfff">last-modified:<span style="color:#d7d7db;margin-left:9px">Tue, 15 Jul 2025 05:16:34 GMT</span></div>
<svg style="left:17px;top:1042px" width="22" height="22" viewBox="0 0 22 22"><circle cx="11" cy="11" r="9.5" fill="none" stroke="#6d6d72" stroke-width="1.6"/><path d="M7.8 8.6 A3.2 3.2 0 1 1 11.9 11.6 C11.2 11.9 11 12.4 11 13.2 V13.8" fill="none" stroke="#6d6d72" stroke-width="1.7" stroke-linecap="round"/><circle cx="11" cy="16.3" r="1.1" fill="#6d6d72"/></svg>
<div class="a" style="font-size:17px;left:58px;top:1043px;color:#75bfff">server:<span style="color:#d7d7db;margin-left:9px">nginx</span></div>
<svg style="left:17px;top:1071px" width="22" height="22" viewBox="0 0 22 22"><circle cx="11" cy="11" r="9.5" fill="none" stroke="#6d6d72" stroke-width="1.6"/><path d="M7.8 8.6 A3.2 3.2 0 1 1 11.9 11.6 C11.2 11.9 11 12.4 11 13.2 V13.8" fill="none" stroke="#6d6d72" stroke-width="1.7" stroke-linecap="round"/><circle cx="11" cy="16.3" r="1.1" fill="#6d6d72"/></svg>
<div class="a" style="font-size:17px;left:58px;top:1072px;color:#75bfff">vary:<span style="color:#d7d7db;margin-left:9px">Accept-Encoding</span></div>
<div class="a" style="left:1px;top:1099px;width:618px;height:39px;background:#232327;border-top:1px solid #38383d;border-bottom:1px solid #38383d"></div>
<svg style="left:11px;top:1114px" width="13" height="10" viewBox="0 0 13 10"><path d="M1.5 1.5 H11.5 L6.5 8.5Z" fill="#8f8f94" stroke="#8f8f94" stroke-width="1.5" stroke-linejoin="round"/></svg>
<div class="a" style="font-size:17.5px;left:31px;top:1106px">Request Headers (326 B)</div>
<div class="a t16" style="left:531px;top:1107px">Raw</div>
<div class="a" style="left:571px;top:1109px;width:38px;height:20px;background:#7a7a7e;border-radius:10px"></div>
<div class="a" style="left:575px;top:1113px;width:12px;height:12px;background:#c8c8cc;border-radius:6px"></div>
<svg style="left:17px;top:1138px" width="22" height="22" viewBox="0 0 22 22"><circle cx="11" cy="11" r="9.5" fill="none" stroke="#6d6d72" stroke-width="1.6"/><path d="M7.8 8.6 A3.2 3.2 0 1 1 11.9 11.6 C11.2 11.9 11 12.4 11 13.2 V13.8" fill="none" stroke="#6d6d72" stroke-width="1.7" stroke-linecap="round"/><circle cx="11" cy="16.3" r="1.1" fill="#6d6d72"/></svg>
<div class="a" style="font-size:17px;left:58px;top:1139px;color:#75bfff">accept:<span style="color:#d7d7db;margin-left:9px">text/html,application/xhtml+xml,application/xml;q=0.9,*/*;q=0.8</span></div>
<svg style="left:17px;top:1166px" width="22" height="22" viewBox="0 0 22 22"><circle cx="11" cy="11" r="9.5" fill="none" stroke="#6d6d72" stroke-width="1.6"/><path d="M7.8 8.6 A3.2 3.2 0 1 1 11.9 11.6 C11.2 11.9 11 12.4 11 13.2 V13.8" fill="none" stroke="#6d6d72" stroke-width="1.7" stroke-linecap="round"/><circle cx="11" cy="16.3" r="1.1" fill="#6d6d72"/></svg>
<div class="a" style="font-size:17px;left:58px;top:1167px;color:#75bfff">accept-encoding:<span style="color:#d7d7db;margin-left:9px">gzip, deflate, br</span></div>
<svg style="left:17px;top:1195px" width="22" height="22" viewBox="0 0 22 22"><circle cx="11" cy="11" r="9.5" fill="none" stroke="#6d6d72" stroke-width="1.6"/><path d="M7.8 8.6 A3.2 3.2 0 1 1 11.9 11.6 C11.2 11.9 11 12.4 11 13.2 V13.8" fill="none" stroke="#6d6d72" stroke-width="1.7" stroke-linecap="round"/><circle cx="11" cy="16.3" r="1.1" fill="#6d6d72"/></svg>
<div class="a" style="font-size:17px;left:58px;top:1196px;color:#75bfff">accept-language:<span style="color:#d7d7db;margin-left:9px">en-US,en;q=0.5</span></div>
<svg style="left:17px;top:1223px" width="22" height="22" viewBox="0 0 22 22"><circle cx="11" cy="11" r="9.5" fill="none" stroke="#6d6d72" stroke-width="1.6"/><path d="M7.8 8.6 A3.2 3.2 0 1 1 11.9 11.6 C11.2 11.9 11 12.4 11 13.2 V13.8" fill="none" stroke="#6d6d72" stroke-width="1.7" stroke-linecap="round"/><circle cx="11" cy="16.3" r="1.1" fill="#6d6d72"/></svg>
<div class="a" style="font-size:17px;left:58px;top:1224px;color:#75bfff">sec-fetch-dest:<span style="color:#d7d7db;margin-left:9px">document</span></div>
<svg style="left:17px;top:1252px" width="22" height="22" viewBox="0 0 22 22"><circle cx="11" cy="11" r="9.5" fill="none" stroke="#6d6d72" stroke-width="1.6"/><path d="M7.8 8.6 A3.2 3.2 0 1 1 11.9 11.6 C11.2 11.9 11 12.4 11 13.2 V13.8" fill="none" stroke="#6d6d72" stroke-width="1.7" stroke-linecap="round"/><circle cx="11" cy="16.3" r="1.1" fill="#6d6d72"/></svg>
<div class="a" style="font-size:17px;left:58px;top:1253px;color:#75bfff">sec-fetch-mode:<span style="color:#d7d7db;margin-left:9px">navigate</span></div>
<svg style="left:17px;top:1280px" width="22" height="22" viewBox="0 0 22 22"><circle cx="11" cy="11" r="9.5" fill="none" stroke="#6d6d72" stroke-width="1.6"/><path d="M7.8 8.6 A3.2 3.2 0 1 1 11.9 11.6 C11.2 11.9 11 12.4 11 13.2 V13.8" fill="none" stroke="#6d6d72" stroke-width="1.7" stroke-linecap="round"/><circle cx="11" cy="16.3" r="1.1" fill="#6d6d72"/></svg>
<div class="a" style="font-size:17px;left:58px;top:1281px;color:#75bfff">sec-fetch-site:<span style="color:#d7d7db;margin-left:9px">same-origin</span></div>
<svg style="left:17px;top:1309px" width="22" height="22" viewBox="0 0 22 22"><circle cx="11" cy="11" r="9.5" fill="none" stroke="#6d6d72" stroke-width="1.6"/><path d="M7.8 8.6 A3.2 3.2 0 1 1 11.9 11.6 C11.2 11.9 11 12.4 11 13.2 V13.8" fill="none" stroke="#6d6d72" stroke-width="1.7" stroke-linecap="round"/><circle cx="11" cy="16.3" r="1.1" fill="#6d6d72"/></svg>
<div class="a" style="font-size:17px;left:58px;top:1310px;color:#75bfff">sec-fetch-user:<span style="color:#d7d7db;margin-left:9px">?1</span></div>
<svg style="left:17px;top:1338px" width="22" height="22" viewBox="0 0 22 22"><circle cx="11" cy="11" r="9.5" fill="none" stroke="#6d6d72" stroke-width="1.6"/><path d="M7.8 8.6 A3.2 3.2 0 1 1 11.9 11.6 C11.2 11.9 11 12.4 11 13.2 V13.8" fill="none" stroke="#6d6d72" stroke-width="1.7" stroke-linecap="round"/><circle cx="11" cy="16.3" r="1.1" fill="#6d6d72"/></svg>
<div class="a" style="font-size:17px;left:58px;top:1339px;color:#75bfff">upgrade-insecure-requests:<span style="color:#d7d7db;margin-left:9px">1</span></div>
<svg style="left:534px;top:628px" width="23" height="30" viewBox="-1 -1 23 30"><path d="M3.5 0 C1.5 0 0.3 1.8 0.3 4.5 V16.8 A10.1 10.4 0 0 0 20.5 17.3 C20.5 11 12.5 4.3 5.4 0.6 C4.8 0.2 4.2 0 3.5 0 Z" fill="#9329ff" stroke="rgba(0,0,0,0.5)" stroke-width="0.9"/></svg>
<div class="a" style="left:839px;top:604px;width:619px;height:735px;background:#1b1b1e;border-left:1px solid #38383d"></div>
<div class="a" style="left:840px;top:604px;width:618px;height:38px;background:#0c0c0d;border-bottom:1px solid #38383d"></div>
<div class="a" style="left:1291px;top:604px;width:95px;height:37px;background:#232327;border-top:4px solid #0a84ff"></div>
<svg style="left:850px;top:614px" width="22" height="19" viewBox="0 0 22 19"><rect x="0.8" y="0.8" width="20.4" height="17.4" rx="1.5" fill="none" stroke="#b1b1b3" stroke-width="1.6"/><path d="M15.5 1 V18" stroke="#b1b1b3" stroke-width="1.6"/><rect x="16.5" y="2" width="3.5" height="15" fill="#5a5a5f"/><path d="M4.5 5 L11 9.5 L4.5 14 Z" fill="none" stroke="#b1b1b3" stroke-width="1.5" stroke-linejoin="round"/></svg>
<div class="a t18" style="left:898px;top:611px;color:#b1b1b3">Headers</div>
<div class="a t18" style="left:998px;top:611px;color:#b1b1b3">Cookies</div>
<div class="a t18" style="left:1096px;top:611px;color:#b1b1b3">Request</div>
<div class="a t18" style="left:1195px;top:611px;color:#b1b1b3">Response</div>
<div class="a t18" style="left:1307px;top:611px;color:#fbfbfe">Timings</div>
<div class="a" style="left:840px;top:642px;width:618px;height:33px;border-bottom:1px solid #38383d"></div>
<div class="a t16" style="left:846px;top:647px">Queued: 0 ms</div>
<div class="sep" style="left:965px;top:648px;height:20px"></div>
<div class="a t16" style="left:981px;top:647px">Started: 0 ms</div>
<div class="sep" style="left:1096px;top:648px;height:20px"></div>
<div class="a t16" style="left:1112px;top:647px">Downloaded: 62 ms</div>
<div class="a t16" style="left:846px;top:681px;font-weight:bold;color:#939395">Request Timing</div>
<div class="a t16" style="left:846px;top:709px;color:#939395">Blocked:</div>
<div class="a" style="left:1071px;top:711px;width:2px;height:18px;background:#f4a0c8"></div>
<div class="a" style="left:1078px;top:711px;font-size:13px;font-weight:bold;color:#d7d7db">0 ms</div>
<div class="a t16" style="left:846px;top:736px;color:#939395">DNS Resolution:</div>
<div class="a" style="left:1071px;top:738px;width:2px;height:18px;background:#b772d9"></div>
<div class="a" style="left:1078px;top:738px;font-size:13px;font-weight:bold;color:#d7d7db">0 ms</div>
<div class="a t16" style="left:846px;top:763px;color:#939395">Connecting:</div>
<div class="a" style="left:1071px;top:765px;width:2px;height:18px;background:#c9652a"></div>
<div class="a" style="left:1078px;top:765px;font-size:13px;font-weight:bold;color:#d7d7db">0 ms</div>
<div class="a t16" style="left:846px;top:791px;color:#939395">TLS Setup:</div>
<div class="a" style="left:1071px;top:793px;width:2px;height:18px;background:#c9652a"></div>
<div class="a" style="left:1078px;top:793px;font-size:13px;font-weight:bold;color:#d7d7db">0 min</div>
<div class="a t16" style="left:846px;top:819px;color:#939395">Sending:</div>
<div class="a" style="left:1071px;top:821px;width:321px;height:18px;background:#3d93c4"></div>
<div class="a" style="left:1398px;top:821px;font-size:13px;font-weight:bold;color:#d7d7db">62 ms</div>
<div class="a t16" style="left:846px;top:846px;color:#939395">Waiting:</div>
<div class="a" style="left:1392px;top:848px;width:2px;height:18px;background:#5a7fb0"></div>
<div class="a" style="left:1399px;top:848px;font-size:13px;font-weight:bold;color:#d7d7db">0 ms</div>
<div class="a t16" style="left:846px;top:874px;color:#939395">Receiving:</div>
<div class="a" style="left:1392px;top:876px;width:2px;height:18px;background:#6ab04c"></div>
<div class="a" style="left:1399px;top:876px;font-size:13px;font-weight:bold;color:#d7d7db">0 ms</div>
<svg style="left:850px;top:908px" width="22" height="22" viewBox="0 0 22 22"><circle cx="11" cy="11" r="9.5" fill="none" stroke="#d7d7db" stroke-width="1.6"/><path d="M7.8 8.6 A3.2 3.2 0 1 1 11.9 11.6 C11.2 11.9 11 12.4 11 13.2 V13.8" fill="none" stroke="#d7d7db" stroke-width="1.7" stroke-linecap="round"/><circle cx="11" cy="16.3" r="1.1" fill="#d7d7db"/></svg>
<svg style="left:1372px;top:628px" width="23" height="30" viewBox="-1 -1 23 30"><path d="M3.5 0 C1.5 0 0.3 1.8 0.3 4.5 V16.8 A10.1 10.4 0 0 0 20.5 17.3 C20.5 11 12.5 4.3 5.4 0.6 C4.8 0.2 4.2 0 3.5 0 Z" fill="#9329ff" stroke="rgba(0,0,0,0.5)" stroke-width="0.9"/></svg>
</body></html>
